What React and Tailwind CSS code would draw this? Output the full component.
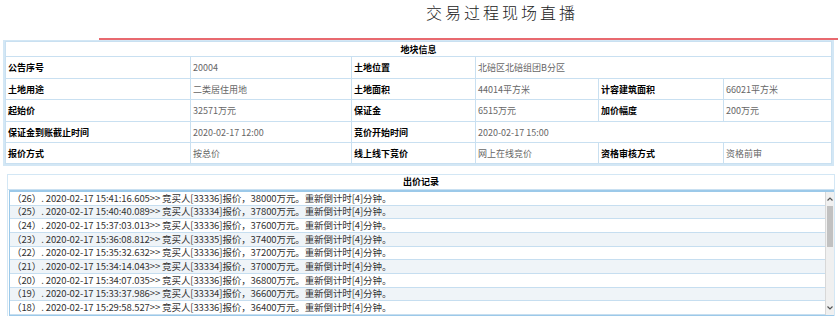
const bids = [
  ['26', '15:41:16.605', '33336', '38000'],
  ['25', '15:40:40.089', '33334', '37800'],
  ['24', '15:37:03.013', '33336', '37600'],
  ['23', '15:36:08.812', '33335', '37400'],
  ['22', '15:35:32.632', '33336', '37200'],
  ['21', '15:34:14.043', '33334', '37000'],
  ['20', '15:34:07.035', '33336', '36800'],
  ['19', '15:33:37.986', '33334', '36600'],
  ['18', '15:29:58.527', '33336', '36400'],
]

function Label({ children }) {
  return (
    <td className="border border-[#c9e0f1] pl-[2px] font-bold text-black">{children}</td>
  )
}

function Value({ children, span }) {
  return (
    <td colSpan={span} className="border border-[#c9e0f1] pl-[2px] text-[#666]">
      {children}
    </td>
  )
}

export default function App() {
  return (
    <div className="h-[316px] w-[838px] overflow-hidden bg-white font-['Noto_Sans_CJK_SC',sans-serif]">
      {/* 标题 */}
      <div className="flex h-[38px] items-start pl-[426px] pt-[3px]">
        <h1 className="font-['Liberation_Serif','Noto_Sans_CJK_SC',serif] text-[16px] font-light leading-[22px] tracking-[3px] text-[#222]">
          交易过程现场直播
        </h1>
      </div>
      <div className="ml-[99px] h-[2px] bg-[#e8696f]" />

      {/* 地块信息 */}
      <div className="ml-[3px] mr-[4px] border-2 border-t border-[#d3e7f5]">
        <table className="w-full table-fixed border-collapse text-[9px] leading-none">
          <colgroup>
            <col className="w-[185px]" />
            <col className="w-[161px]" />
            <col className="w-[124px]" />
            <col className="w-[123px]" />
            <col className="w-[125px]" />
            <col />
          </colgroup>
          <tbody>
            <tr className="h-[15px]">
              <td colSpan={6} className="border border-[#c9e0f1] text-center font-bold text-black">
                地块信息
              </td>
            </tr>
            <tr className="h-[22px]">
              <Label>公告序号</Label>
              <Value>20004</Value>
              <Label>土地位置</Label>
              <Value span={3}>北碚区北碚组团B分区</Value>
            </tr>
            <tr className="h-[21px]">
              <Label>土地用途</Label>
              <Value>二类居住用地</Value>
              <Label>土地面积</Label>
              <Value>44014平方米</Value>
              <Label>计容建筑面积</Label>
              <Value>66021平方米</Value>
            </tr>
            <tr className="h-[22px]">
              <Label>起始价</Label>
              <Value>32571万元</Value>
              <Label>保证金</Label>
              <Value>6515万元</Value>
              <Label>加价幅度</Label>
              <Value>200万元</Value>
            </tr>
            <tr className="h-[21px]">
              <Label>保证金到账截止时间</Label>
              <Value>2020-02-17 12:00</Value>
              <Label>竞价开始时间</Label>
              <Value span={3}>2020-02-17 15:00</Value>
            </tr>
            <tr className="h-[21px]">
              <Label>报价方式</Label>
              <Value>按总价</Value>
              <Label>线上线下竞价</Label>
              <Value>网上在线竞价</Value>
              <Label>资格审核方式</Label>
              <Value>资格前审</Value>
            </tr>
          </tbody>
        </table>
      </div>

      {/* 出价记录 */}
      <div className="ml-[7px] mr-[3px] mt-[8px] border border-[#d3e7f5]">
        <div className="flex h-[15px] items-center justify-center border-b border-[#c9e0f1] text-[9px] font-bold text-black">
          出价记录
        </div>
        <div className="ml-[1px] flex border-y-2 border-l border-[#9cc9e9]">
          <div className="flex-1">
            {bids.map(([n, t, who, price], i) => (
              <div
                key={n}
                className={`flex h-[13.67px] items-center whitespace-nowrap border-b border-[#c6def0] pl-[2px] text-[9.5px] leading-none tracking-[-0.1px] text-[#333] ${
                  i % 2 === 1 ? 'bg-[#eff4f8]' : 'bg-white'
                }`}
              >
                （{n}）. 2020-02-17 {t}&gt;&gt; 竞买人[{who}]报价，{price}万元。重新倒计时[4]分钟。
              </div>
            ))}
          </div>
          {/* 滚动条 */}
          <div className="flex w-[9px] flex-col border-l border-[#d8d8d8] bg-[#f0f0f0]">
            <div className="flex h-[14px] items-center justify-center">
              <svg width="6" height="4" viewBox="0 0 6 4">
                <path d="M0.5 3.5 L3 1 L5.5 3.5" fill="none" stroke="#555" strokeWidth="1.2" />
              </svg>
            </div>
            <div className="mx-[1px] h-[41px] bg-[#c1c1c1]" />
            <div className="flex-1" />
            <div className="flex h-[14px] items-center justify-center">
              <svg width="6" height="4" viewBox="0 0 6 4">
                <path d="M0.5 0.5 L3 3 L5.5 0.5" fill="none" stroke="#555" strokeWidth="1.2" />
              </svg>
            </div>
          </div>
        </div>
      </div>
    </div>
  )
}
